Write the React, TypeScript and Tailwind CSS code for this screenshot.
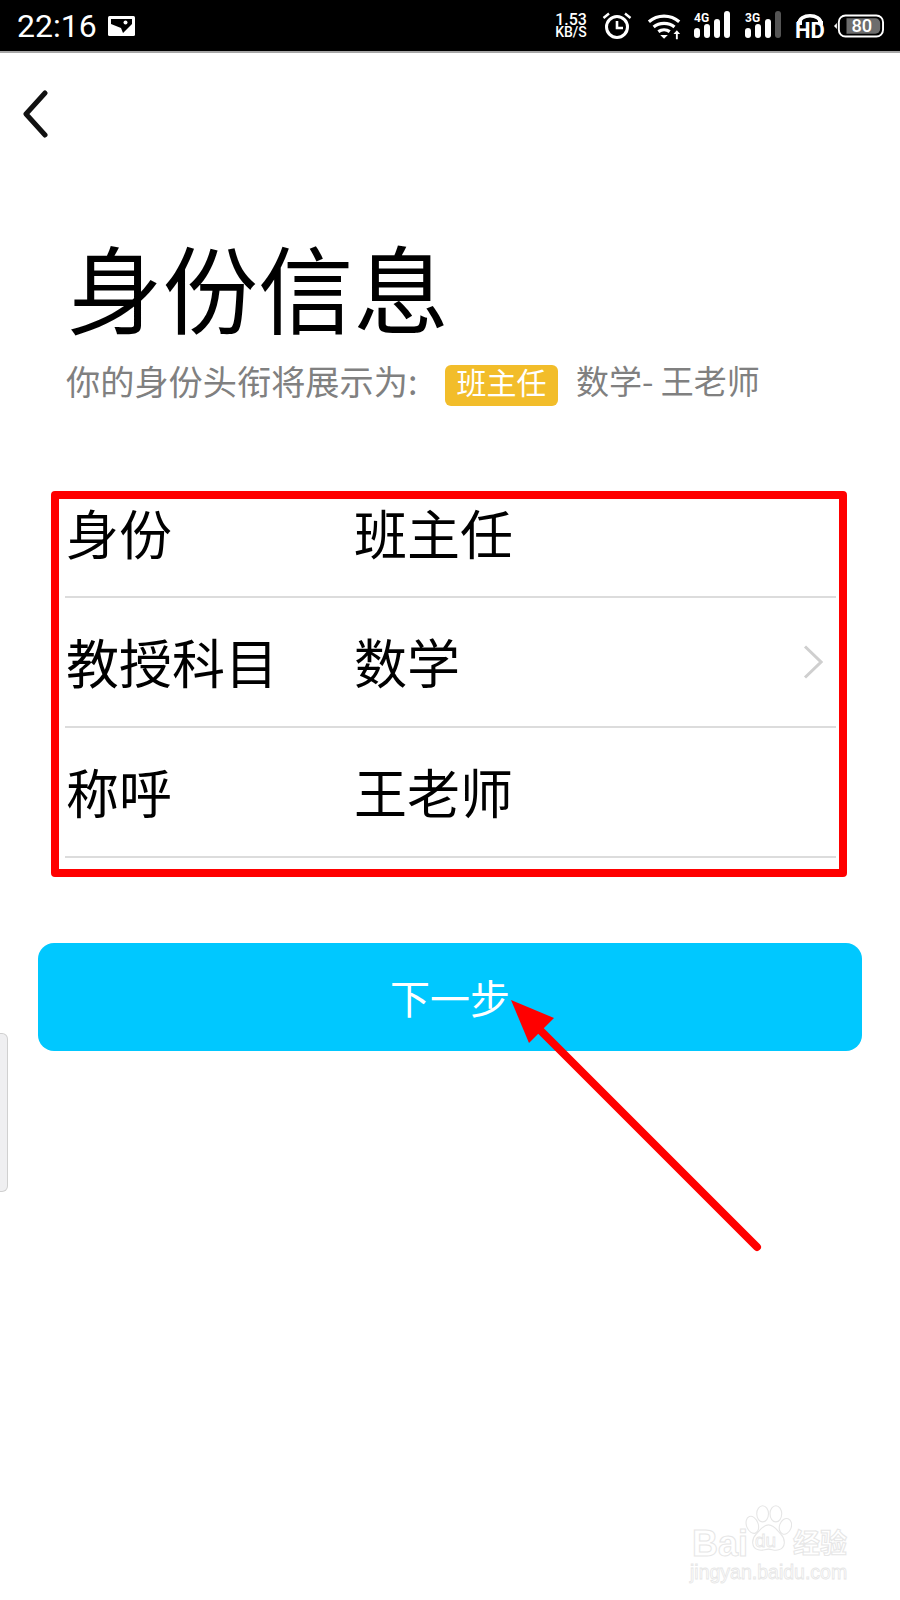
const cjk = "font-['Noto_Sans_CJK_SC','Noto_Sans',sans-serif]";

function StatusIcons() {
  return (
    <div className="flex items-center h-full text-white">
      <div className="w-[38px] flex flex-col items-center font-['Roboto',sans-serif] font-medium mt-[1px]">
        <span className="text-[16px] leading-[13px]">1.53</span>
        <span className="text-[14px] leading-[13px]">KB/S</span>
      </div>
      <svg className="ml-[11px]" width="32" height="32" viewBox="0 0 32 32" fill="none" stroke="white" strokeWidth="3">
        <circle cx="16" cy="17" r="10.5" />
        <path d="M16 11v7h6" strokeWidth="2.6" />
        <path d="M2.5 8 8 3.5M29.500 8 24 3.5" strokeWidth="2.400" />
      </svg>
      <svg className="ml-[14px]" width="36" height="30" viewBox="0 0 38 30" fill="none" stroke="white" strokeWidth="3.4">
        <path d="M2 10.500c9-8 23-8 32 0" />
        <path d="M7 16c6-5 16-5 22 0" />
        <path d="M12 21c3.500-2.500 8.500-2.500 12 0" />
        <path d="M14 24.500h8l-4 4z" fill="white" stroke="none" />
        <path d="M31.500 29v-7" strokeWidth="2" />
        <path d="M28 23.500l3.500-4 3.500 4z" fill="white" stroke="none" />
      </svg>
      <div className="ml-[11px] relative w-[37px] h-[30px]">
        <span className="absolute left-0 top-0 text-[12px] font-bold font-['Roboto',sans-serif] leading-[14px]">4G</span>
        <Bars last="white" />
      </div>
      <div className="ml-[14px] relative w-[37px] h-[30px]">
        <span className="absolute left-0 top-0 text-[12px] font-bold font-['Roboto',sans-serif] leading-[14px]">3G</span>
        <Bars last="#555555" />
      </div>
      <div className="ml-[13px] w-[30px] h-[30px] relative">
        <svg className="absolute left-[1px] top-[1px]" width="28" height="14" viewBox="0 0 28 14" fill="none" stroke="white" strokeWidth="3.5">
          <path d="M3 12c0-11 22-11 22 0" />
          <path d="M1 11h5M22 11h5" strokeWidth="4" />
        </svg>
        <span className="absolute left-0 top-[10px] text-[22px] font-bold leading-[20px] font-['Roboto',sans-serif]">HD</span>
      </div>
      <svg className="ml-[9px]" width="50" height="24" viewBox="0 0 52 24" fill="none">
        <path d="M0 12l3-3v6z" fill="white" />
        <rect x="5" y="1" width="46" height="22" rx="7" stroke="white" strokeWidth="2" />
        <path d="M13 4h30a5 5 0 0 1 5 5v6a5 5 0 0 1-5 5H13z" fill="#6d6d6d" />
        <text x="29" y="18.500" textAnchor="middle" fill="white" fontFamily="Roboto" fontSize="19" fontWeight="500">80</text>
      </svg>
    </div>
  );
}

function Bars({ last }: { last: string }) {
  return (
    <svg className="absolute left-0 top-0" width="37" height="30" viewBox="0 0 37 30">
      <rect x="0" y="17" width="6" height="10" rx="3" fill="white" />
      <rect x="10" y="13" width="6" height="14" rx="3" fill="white" />
      <rect x="20" y="8" width="6" height="19" rx="3" fill="white" />
      <rect x="30" y="0" width="6" height="27" rx="3" fill={last} />
    </svg>
  );
}

function Row({ label, value, first, chevron }: { label: string; value: string; first?: boolean; chevron?: boolean }) {
  return (
    <div className={`flex border-b-2 border-[#dcdcdc] text-[53px] text-black ${first ? "h-[99px] items-start leading-[67px]" : "h-[130px] items-center"}`}>
      <span className="w-[289px] pl-[1px]">{label}</span>
      <span className="flex-1">{value}</span>
      {chevron && (
        <svg className="mr-[13px]" width="20" height="34" viewBox="0 0 20 34" fill="none" stroke="#cfcfcf" strokeWidth="3">
          <path d="M2 1.500 18 17 2 32.500" />
        </svg>
      )}
    </div>
  );
}

export default function App() {
  return (
    <div className={`relative w-[900px] h-[1600px] bg-white overflow-hidden ${cjk}`}>
      <div className="h-[53px] bg-black border-b-2 border-[#a6a6a6] flex items-center justify-between pl-[17px] pr-[16px]">
        <div className="flex items-center">
          <span className="text-white text-[32px] leading-none font-['Roboto',sans-serif]">22:16</span>
          <svg className="ml-[11px]" width="27" height="20" viewBox="0 0 27 20">
            <rect width="27" height="20" rx="1.500" fill="white" />
            <path d="M3 3H24V8L15 17 13 12 3 8z" fill="black" />
            <circle cx="17.500" cy="6.500" r="2" fill="white" />
          </svg>
        </div>
        <StatusIcons />
      </div>

      <div className="h-[122px] pl-[23px] pt-[37px]">
        <svg width="26" height="48" viewBox="0 0 26 48" fill="none" stroke="#111111" strokeWidth="5" strokeLinecap="round" strokeLinejoin="round">
          <path d="M22 3 3 24l19 21" />
        </svg>
      </div>

      <h1 className="mt-[51px] ml-[67px] text-[95.500px] leading-[120px] text-black font-normal">身份信息</h1>

      <div className="mt-[19px] ml-[66px] flex items-start h-[41px] text-[#808080] leading-[30px]">
        <span className="w-[379px] text-[34.200px]">你的身份头衔将展示为:</span>
        <span className="w-[113px] h-[41px] rounded-[6px] bg-[#f2bd2a] text-white text-[30px] leading-[33px] text-center">班主任</span>
        <span className="ml-[18px] text-[33px]">数学- 王老师</span>
      </div>

      <div className="mt-[85px] ml-[51px] w-[796px] h-[386px] border-[8px] border-[#ff0000] rounded-[4px] pl-[6px] pr-[3px]">
        <Row first label="身份" value="班主任" />
        <Row label="教授科目" value="数学" chevron />
        <Row label="称呼" value="王老师" />
      </div>

      <button className="block mt-[66px] ml-[38px] w-[824px] h-[108px] rounded-[16px] bg-[#00c8ff] text-white text-[40px] font-normal">
        下一步
      </button>

      {/* annotation arrow */}
      <svg className="absolute left-[500px] top-[990px]" width="270" height="270" viewBox="500 990 270 270">
        <path d="M536 1026 757 1247" stroke="#ff0000" strokeWidth="8" strokeLinecap="round" />
        <path d="M511 1000 554 1018 529 1043z" fill="#ff0000" />
      </svg>

      {/* side handle */}
      <div className="absolute left-0 top-[1033px] w-[8px] h-[159px] bg-[#efeff1] border border-l-0 border-[#d0d0d0] rounded-r-[6px]" />

      {/* watermark */}
      <div className="absolute left-[690px] top-[1500px] w-[170px] h-[90px] text-white">
        <div className="absolute left-[2px] top-[24px] text-[36px] leading-[40px] font-bold font-['Liberation_Sans',sans-serif] [-webkit-text-stroke:1px_#e6e6e6]">Bai</div>
        <svg className="absolute left-[55px] top-[3px]" width="47" height="54" viewBox="0 0 64 66" fill="white" stroke="#e6e6e6" strokeWidth="1.500">
          <ellipse cx="10" cy="26" rx="8" ry="12" transform="rotate(-20 10 26)" />
          <ellipse cx="24" cy="11" rx="8" ry="11" />
          <ellipse cx="42" cy="11" rx="8" ry="11" />
          <ellipse cx="55" cy="28" rx="8" ry="11" transform="rotate(20 55 28)" />
          <path d="M32 26c8 0 12 8 17 13 6 6 7 18-3 21-6 2-9-1-14-1s-8 3-14 1c-10-3-9-15-3-21 5-5 9-13 17-13z" />
        </svg>
        <div className="absolute left-[65px] top-[30px] text-[19px] leading-[22px] font-['Liberation_Sans',sans-serif] [-webkit-text-stroke:0.8px_#e6e6e6]">du</div>
        <div className={`absolute left-[103px] top-[24px] whitespace-nowrap text-[27px] leading-[36px] font-bold [-webkit-text-stroke:1px_#e6e6e6] ${cjk}`}>经验</div>
        <div className="absolute left-0 top-[60px] whitespace-nowrap text-[19.500px] leading-[24px] font-['Liberation_Sans',sans-serif] [-webkit-text-stroke:0.8px_#e6e6e6]">jingyan.baidu.com</div>
      </div>
    </div>
  );
}
